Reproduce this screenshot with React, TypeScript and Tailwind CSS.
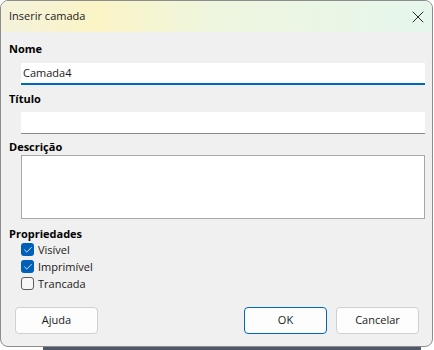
import { X, Check } from 'lucide-react';

const font = { fontFamily: '"Open Sans", "Noto Sans", sans-serif' };

function Field({ label, children }: { label: string; children: React.ReactNode }) {
  return (
    <div className="flex flex-col">
      <div className="text-[11px] font-bold leading-[16px] text-black">{label}</div>
      {children}
    </div>
  );
}

function CheckRow({ label, checked }: { label: string; checked?: boolean }) {
  return (
    <div className="flex h-[17px] items-center gap-[4px] pl-[12px]">
      {checked ? (
        <span className="flex h-[13px] w-[13px] items-center justify-center rounded-[3px] bg-[#005fb8]">
          <Check className="h-[10px] w-[10px] text-white" strokeWidth={2} />
        </span>
      ) : (
        <span className="h-[13px] w-[13px] rounded-[3px] border border-[#5c5c5c] bg-[#f7f7f7]" />
      )}
      <span className="text-[11px] leading-[17px] text-[#1a1a1a]">{label}</span>
    </div>
  );
}

function Button({ label, primary }: { label: string; primary?: boolean }) {
  return (
    <button
      className={`h-[27px] w-[83px] rounded-[4px] border bg-[#fdfdfd] text-[11px] text-[#1a1a1a] ${
        primary ? 'border-[#0067c0]' : 'border-[#d0d0d0]'
      }`}
    >
      {label}
    </button>
  );
}

export default function App() {
  return (
    <div className="flex h-[350px] w-[434px] flex-col bg-white" style={font}>
      <div className="flex h-[347px] w-[433px] flex-col overflow-hidden rounded-[8px] border border-[#8c8c8c] bg-[#f0f0f0]">
        <div className="flex h-[31px] shrink-0 items-center justify-between bg-[linear-gradient(90deg,#f4f2dc_0%,#fbf4c6_22%,#eef6df_50%,#e6f6ec_100%)] pl-[8px] pr-[4px]">
          <span className="text-[11px] text-[#1a1a1a]">Inserir camada</span>
          <X className="h-[20px] w-[20px] text-[#1a1a1a]" strokeWidth={1.1} />
        </div>

        <div className="flex flex-1 flex-col pl-[8px] pr-[7px] pt-[9px]">
          <Field label="Nome">
            <div className="ml-[12px] mt-[6px] flex h-[22px] items-center border-b-2 border-[#0067c0] bg-white pl-[2px] text-[11px] text-[#1a1a1a]">
              Camada4
            </div>
          </Field>
          <div className="mt-[6px]">
            <Field label="Título">
              <div className="ml-[12px] mt-[5px] h-[22px] border-b border-[#8a8a8a] bg-white" />
            </Field>
          </div>
          <div className="mt-[5px]">
            <Field label="Descrição">
              <div className="ml-[12px] h-[64px] border border-[#a8a8a8] bg-white" />
            </Field>
          </div>
          <div className="mt-[8px] text-[11px] font-bold leading-[14px] text-black">Propriedades</div>
          <CheckRow label="Visível" checked />
          <CheckRow label="Imprimível" checked />
          <CheckRow label="Trancada" />

          <div className="mt-auto flex items-center pb-[12px] pl-[6px] pr-[6px]">
            <Button label="Ajuda" />
            <div className="flex-1" />
            <Button label="OK" primary />
            <div className="w-[9px]" />
            <Button label="Cancelar" />
          </div>
        </div>
      </div>
      <div className="flex h-[3px]">
        <div className="w-[43px]" />
        <div className="w-[378px] bg-[#4e5866]" />
      </div>
    </div>
  );
}
